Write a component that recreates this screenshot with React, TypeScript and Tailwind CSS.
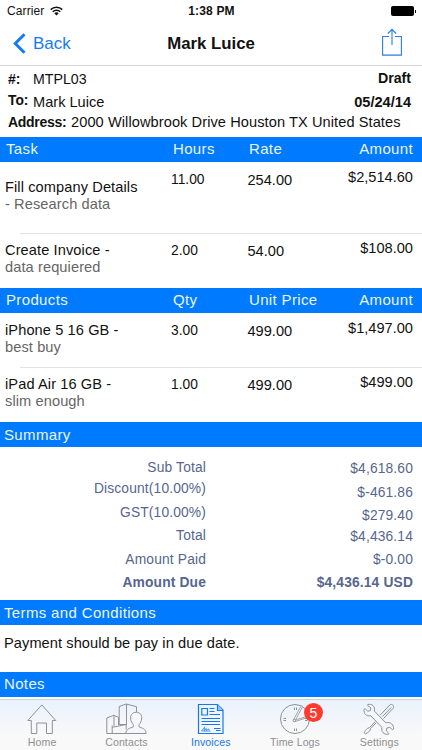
import type { ReactNode } from "react";

type Cell = { text: string; className: string };

function Bar({ children, className }: { children: ReactNode; className: string }) {
  return (
    <div className={`flex h-[25px] shrink-0 bg-[#007aff] text-[15px] tracking-[0.35px] text-[#eaf6ff] ${className}`}>
      {children}
    </div>
  );
}

function TableHead({ labels }: { labels: [string, string, string, string] }) {
  return (
    <Bar className="pt-[3px] pr-[9px] pl-[6px]">
      <span className="w-[167px]">{labels[0]}</span>
      <span className="w-[76px]">{labels[1]}</span>
      <span className="flex-1">{labels[2]}</span>
      <span>{labels[3]}</span>
    </Bar>
  );
}

type LineItem = {
  title: string;
  note: string;
  qty: string;
  rate: string;
  amount: string;
  height: string;
  titlePad: string;
  qtyPad: string;
  amountPad: string;
  divided?: boolean;
};

function ItemRow(item: LineItem) {
  return (
    <div className={`flex flex-col ${item.height}`}>
      <div className="flex flex-1 pr-[9px] pl-[5px]">
        <div className={`w-[166px] leading-[17px] tracking-[0.1px] ${item.titlePad}`}>
          <div>{item.title}</div>
          <div className="text-[#666]">{item.note}</div>
        </div>
        <span className={`w-[76.500px] text-[13.8px] ${item.qtyPad}`}>{item.qty}</span>
        <span className={`flex-1 ${item.qtyPad}`}>{item.rate}</span>
        <span className={item.amountPad}>{item.amount}</span>
      </div>
      {item.divided && <div className="ml-[20px] h-px bg-[#e2e2e4]" />}
    </div>
  );
}

const labels: Cell[] = [
  { text: "Sub Total", className: "h-[21px]" },
  { text: "Discount(10.00%)", className: "h-[24px]" },
  { text: "GST(10.00%)", className: "h-[23px]" },
  { text: "Total", className: "h-[24px]" },
  { text: "Amount Paid", className: "h-[23px]" },
  { text: "Amount Due", className: "font-bold" },
];

const totals: Cell[] = [
  { text: "$4,618.60", className: "h-[24px]" },
  { text: "$-461.86", className: "h-[23px]" },
  { text: "$279.40", className: "h-[21px]" },
  { text: "$4,436.14", className: "h-[23px]" },
  { text: "$-0.00", className: "h-[23px]" },
  { text: "$4,436.14 USD", className: "font-bold" },
];

function HomeIcon() {
  return (
    <svg width="30" height="32" viewBox="0 0 30 32" fill="none" stroke="#8f9194" strokeWidth="1" strokeLinejoin="round">
      <path d="M.8 17.500 14.8 1.900l14 15.600h-3.500v13h-5.800V20H9.800v10.500H4.300v-13z" />
    </svg>
  );
}

function ContactsIcon() {
  return (
    <svg width="42" height="32" viewBox="0 0 42 32" fill="none" stroke="#8f9194" strokeWidth="1" strokeLinejoin="round">
      <path d="M1.800 30.500V15l7-2.700 4.700 2V22M9 12.300V23" />
      <path d="M14.200 22V3.500l7-2.500 10.300 2.700V9M21.500 1v20.500H14.500" />
      <path d="M7.200 30.500v-6.200l14-2.800v5M7.200 24.300V22.500M1.800 30.500H21" />
      <path
        d="M31.200 9.300c-4 0-6.200 3-5.500 6.700.2 2 1.200 4.300 2.600 5.500v2.300c-3 1.500-7.200 1.700-7.500 6.700h20.400c-.3-5-4.300-5.200-7.200-6.700v-2.300c1.400-1.200 2.400-3.500 2.600-5.500.7-3.700-1.400-6.700-5.400-6.700z"
        fill="#f4f8fd"
      />
    </svg>
  );
}

function InvoiceIcon() {
  return (
    <svg width="28" height="32" viewBox="0 0 28 32" fill="none" stroke="#1478ee" strokeWidth="1.2">
      <path d="M1.500 1.500h19l5.500 5.500v23.500H1.500z" />
      <path d="M20.500 1.500V7.500H26" fill="#9ac8fb" />
      <path d="M4.800 5.500h5.700V12H4.800z" />
      <path d="M12.500 5.500h5M12.500 8.500h5M12.500 11.500h10.500M4.500 15.500h18.500M4.500 18.500h18.500M4.500 21.500h18.500M17 25.500h6.500M19 27.500h4.500" />
      <path d="M4.500 27.500c2-1 2.500-3.500 3-3.300s-1 3.500 0 3.300 1-2.300 1.700-2.100-.2 2.100.6 2 1-1.600 1.700-1.500 0 1.300 1 1M4.500 28h9" strokeWidth=".8" />
    </svg>
  );
}

function ClockIcon() {
  return (
    <svg width="31" height="32" viewBox="0 0 31 32" fill="none" stroke="#8f9194" strokeWidth="1">
      <circle cx="15" cy="16" r="14.500" />
      <path d="M14.500 4.500v2.500M16.500 4.500v2.500M14.500 25.500v2.500M16.500 25.500v2.500M3.500 15.500h2.500M3.500 17.500h2.500M25 15.500h2.500M25 17.500h2.500" />
      <path d="M13.500 16.800 21.300 2.600l1.400.8-7.200 13.500L28.500 13v1.300l-13.500 4.200z" fill="#f4f8fd" strokeWidth=".8" strokeLinejoin="round" />
      <circle cx="14.300" cy="17.500" r="1.200" fill="#f4f8fd" />
    </svg>
  );
}

function ToolsIcon() {
  return (
    <svg width="32" height="32" viewBox="0 0 32 32" fill="none" stroke="#8f9194" strokeWidth="1" strokeLinejoin="round">
      <path d="M17 12.300 26.800 2c2.300-1.800 5 1 3.400 3.200L20.500 15.500M19.500 13.500l8.700-9" />
      <path d="m12.300 18.500-5.800 6.200-2 .6c-1.600 1.500-2.800 3-3.200 4.500.2.800.7 1 1.300.9 1.600-.5 3-1.500 4.300-3l.6-2 5.800-6" />
      <path
        d="M4.800 1.500c4.500-1 7.500 2 6.500 6.500L22.800 19.800c4.500-1.300 8.500 2 7.600 6.200-.3.800-.8.800-1.300.3l-2.300-2-2.900.7-.6 2.900 2.300 2.200c.5.600.2 1-.6 1.100-4.200.7-7.100-2.600-6-6.700L7.700 12.700C3.300 13.800.3 10.500 1.200 6.300c.3-.8.8-.8 1.300-.3l2.300 2.200 2.500-.6.600-2.700-2.900-2.100c-.6-.5-.8-1-.2-1.300z"
        fill="#f4f8fd"
      />
    </svg>
  );
}

function Tab({ icon, label, active, badge }: { icon: ReactNode; label: string; active?: boolean; badge?: string }) {
  return (
    <div className="relative flex w-[84.3px] flex-col items-center gap-px pt-[3px]">
      {icon}
      <span className={`text-[10.600px] leading-[13px] tracking-[0.1px] whitespace-nowrap ${active ? "text-[#1478ee]" : "text-[#8f8f8f]"}`}>
        {label}
      </span>
      {badge && (
        <span className="absolute top-[3px] left-[51px] flex size-[19px] items-center justify-center rounded-full bg-[#ff3b30] text-[14px] leading-none text-white">
          {badge}
        </span>
      )}
    </div>
  );
}

export default function App() {
  return (
    <div className="flex h-[750px] w-[422px] flex-col overflow-hidden bg-white font-['Liberation_Sans',Arial,sans-serif] text-[14.600px] leading-[18px] whitespace-nowrap text-[#111]">
      <header className="flex h-[66px] shrink-0 flex-col border-b border-[#d5d5d7]">
        <div className="grid h-[22px] grid-cols-3 items-center pr-[6px] pl-[7px] text-[12px]">
          <div className="flex items-center gap-[6px]">
            <span className="tracking-[0.1px]">Carrier</span>
            <svg width="13" height="10" viewBox="0 0 13 10" fill="none" stroke="#111" strokeWidth="1.500">
              <path d="M.7 3.600a8.300 8.300 0 0 1 11.600 0M2.700 5.800a5.400 5.400 0 0 1 7.600 0" />
              <path d="M6.500 9.500 4.300 7.300a3.100 3.100 0 0 1 4.400 0z" fill="#111" stroke="none" />
            </svg>
          </div>
          <span className="text-center text-[12px] font-bold tracking-[0.150px]">1:38 PM</span>
          <div className="flex items-center justify-end">
            <div className="h-[10px] w-[23px] rounded-[2px] bg-black" />
            <div className="ml-px h-[3px] w-px bg-black" />
          </div>
        </div>
        <div className="grid h-[43px] grid-cols-3 items-center px-[13px]">
          <div className="flex items-center gap-[7px] text-[17px] text-[#147bf4]">
            <svg width="13" height="21" viewBox="0 0 13 21" fill="none" stroke="#147bf4" strokeWidth="3">
              <path d="M11.500 1.200 2.300 10.500l9.200 9.300" />
            </svg>
            Back
          </div>
          <h1 className="text-center text-[16.800px] font-bold">Mark Luice</h1>
          <div className="flex justify-end pr-[7px] pb-[3px]">
            <svg width="20" height="28" viewBox="0 0 20 28" fill="none" stroke="#2580e6" strokeWidth="1.100">
              <path d="M7 8.500H.6v18.600h18.800V8.500H13M10 17V1.300M5.800 5.500 10 1.300l4.200 4.200" />
            </svg>
          </div>
        </div>
      </header>

      <section className="flex h-[71px] shrink-0 flex-col pr-[11px] pl-[8px]">
        <div className="flex h-[23px]">
          <b className="w-[25px] pt-[4px] text-[14px]">#:</b>
          <span className="flex-1 pt-[4px] text-[14.200px]">MTPL03</span>
          <b className="pt-[3px] text-[14.200px]">Draft</b>
        </div>
        <div className="flex h-[24px]">
          <b className="w-[25px] pt-[3px] text-[13.800px]">To:</b>
          <span className="flex-1 pt-[4px]">Mark Luice</span>
          <b className="pt-[4px] text-[14.600px]">05/24/14</b>
        </div>
        <div className="flex">
          <b className="w-[63px] text-[14px] tracking-[-0.300px]">Address:</b>
          <span className="tracking-[0.080px]">2000 Willowbrook Drive Houston TX United States</span>
        </div>
      </section>

      <TableHead labels={["Task", "Hours", "Rate", "Amount"]} />
      <ItemRow title="Fill company Details" note="- Research data" qty="11.00" rate="254.00" amount="$2,514.60"
        height="h-[72px]" titlePad="pt-[17px]" qtyPad="pt-[9px]" amountPad="pt-[6px]" divided />
      <ItemRow title="Create Invoice -" note="data requiered" qty="2.00" rate="54.00" amount="$108.00"
        height="h-[54px]" titlePad="pt-[8px]" qtyPad="pt-[8px]" amountPad="pt-[5px]" />

      <TableHead labels={["Products", "Qty", "Unit Price", "Amount"]} />
      <ItemRow title="iPhone 5 16 GB -" note="best buy" qty="3.00" rate="499.00" amount="$1,497.00"
        height="h-[55px]" titlePad="pt-[9px]" qtyPad="pt-[9px]" amountPad="pt-[6px]" divided />
      <ItemRow title="iPad Air 16 GB -" note="slim enough" qty="1.00" rate="499.00" amount="$499.00"
        height="h-[54px]" titlePad="pt-[8px]" qtyPad="pt-[8px]" amountPad="pt-[5px]" />

      <Bar className="pt-[4px] pl-[4px]">Summary</Bar>
      <section className="flex h-[153px] shrink-0 justify-end pr-[9px] text-[13.800px] tracking-[0.15px] text-[#56668f]">
        <div className="flex flex-1 flex-col items-end pt-[12px]">
          {labels.map((l) => (
            <div key={l.text} className={l.className}>{l.text}</div>
          ))}
        </div>
        <div className="flex w-[207px] flex-col items-end pt-[13px]">
          {totals.map((t) => (
            <div key={t.text} className={t.className}>{t.text}</div>
          ))}
        </div>
      </section>

      <Bar className="pt-[4px] pl-[4px]">Terms and Conditions</Bar>
      <p className="h-[47px] shrink-0 pt-[9px] pl-[4px] tracking-[0.080px]">Payment should be pay in due date.</p>
      <Bar className="pt-[3px] pl-[4px]">Notes</Bar>

      <nav className="mt-[2px] flex h-[51px] shrink-0 border-t border-[#c9d2dc] bg-linear-to-b from-[#e9f2fd] to-[#f9f9fa] to-70%">
        <Tab icon={<HomeIcon />} label="Home" />
        <Tab icon={<ContactsIcon />} label="Contacts" />
        <Tab icon={<InvoiceIcon />} label="Invoices" active />
        <Tab icon={<ClockIcon />} label="Time Logs" badge="5" />
        <Tab icon={<ToolsIcon />} label="Settings" />
      </nav>
    </div>
  );
}
